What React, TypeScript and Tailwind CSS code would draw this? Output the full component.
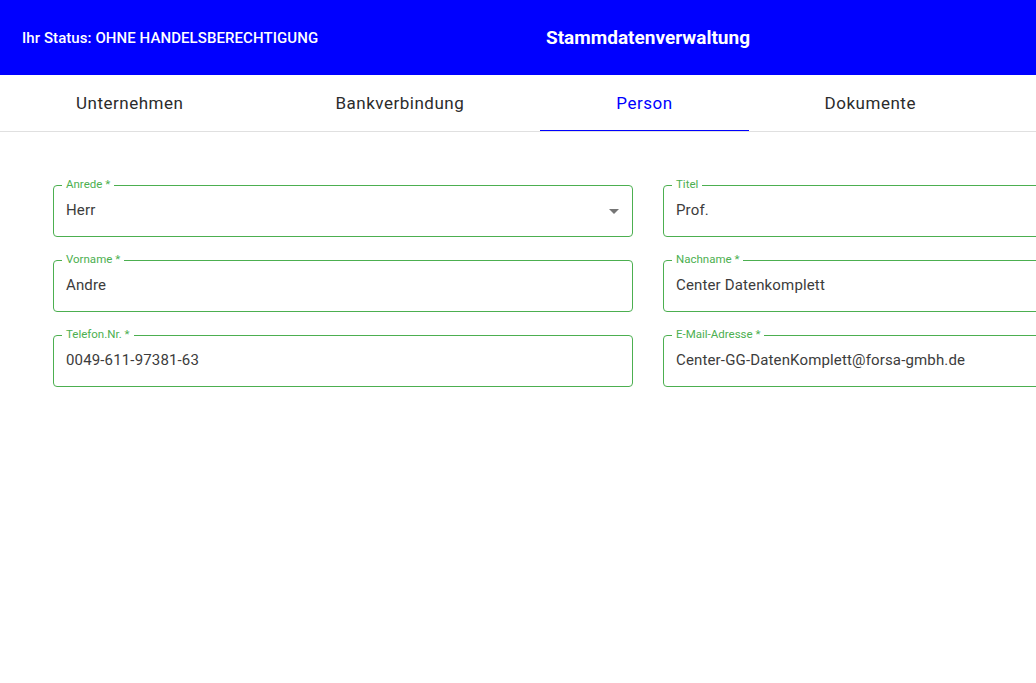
import React from "react";

const font = { fontFamily: "Roboto, 'Liberation Sans', sans-serif" };

function Field({ label, value, select }: { label: string; value: string; select?: boolean }) {
  return (
    <div className="relative h-[52px] rounded-[4px] border border-[#4caf50] flex items-center pl-[12px] pr-[12px]">
      <span className="absolute left-[8px] top-[-9px] bg-white px-[4px] text-[11.5px] leading-[14px] text-[#4caf50]">
        {label}
      </span>
      <span className="flex-1 text-[15px] leading-[20px] pb-[2px] text-[#3c3c3c] tracking-[0.01em]">{value}</span>
      {select && (
        <svg width="10" height="5" viewBox="0 0 10 5" className="mr-[1px]">
          <path d="M0 0 L10 0 L5 5 Z" fill="#757575" />
        </svg>
      )}
    </div>
  );
}

export default function App() {
  const tabs = ["Unternehmen", "Bankverbindung", "Person", "Dokumente"];
  return (
    <div className="w-[1296px] min-h-[683px] bg-white" style={font}>
      <header className="h-[75px] bg-[#0000ff] grid grid-cols-[1fr_auto_1fr] items-center pt-[2px] px-[22px] text-white">
        <div className="text-[15px] font-medium tracking-[0.005em]">Ihr Status: OHNE HANDELSBERECHTIGUNG</div>
        <div className="text-[19px] font-bold">Stammdatenverwaltung</div>
        <div />
      </header>
      <nav className="flex border-b border-[#e0e0e0] h-[57px]">
        {tabs.map((t) => (
          <div
            key={t}
            className={
              "relative flex items-center justify-center pt-[1px] px-[76px] text-[17px] tracking-[0.03em] " +
              (t === "Person" ? "text-[#0000ff]" : "text-[#2b2b2b]")
            }
          >
            {t}
            {t === "Person" && <div className="absolute left-0 right-0 bottom-0 h-[1.5px] bg-[#0000ff]" />}
          </div>
        ))}
      </nav>
      <main className="px-[53px] pt-[53px] grid grid-cols-2 gap-x-[30px] gap-y-[23px]">
        <Field label="Anrede *" value="Herr" select />
        <Field label="Titel" value="Prof." />
        <Field label="Vorname *" value="Andre" />
        <Field label="Nachname *" value="Center Datenkomplett" />
        <Field label="Telefon.Nr. *" value="0049-611-97381-63" />
        <Field label="E-Mail-Adresse *" value="Center-GG-DatenKomplett@forsa-gmbh.de" />
      </main>
    </div>
  );
}
